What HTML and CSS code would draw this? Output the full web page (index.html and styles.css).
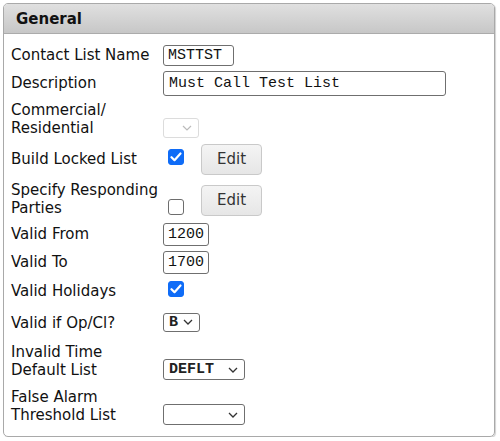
FILE: index.html
```html
<!DOCTYPE html>
<html lang="en">
<head>
    <meta charset="UTF-8">
    <title>General</title>
    <link rel="stylesheet" href="styles.css">
</head>
<body>

    <div class="panel">
        <div class="panel-head">General</div>

        <div class="panel-body">
            <div class="row row-h22">
                <div class="label">Contact List Name</div>
                <div class="field w-name">MSTTST</div>
            </div>

            <div class="row row-h26">
                <div class="label">Description</div>
                <div class="field w-desc">Must Call Test List</div>
            </div>

            <div class="row row-tall">
                <div class="label">Commercial/<br>Residential</div>
                <div class="select select-disabled w-small">
                    <span></span>
                    <svg class="chev" width="10" height="6" viewBox="0 0 10 6"><path d="M1 1l4 4 4-4" fill="none" stroke="currentColor" stroke-width="1.2"/></svg>
                </div>
            </div>

            <div class="row row-h34">
                <div class="label">Build Locked List</div>
                <div class="check checked">
                    <svg width="12" height="10" viewBox="0 0 12 10"><path d="M1.5 5.2l3 3 6-6.7" fill="none" stroke="#fff" stroke-width="2.2" stroke-linecap="round" stroke-linejoin="round"/></svg>
                </div>
                <button class="btn">Edit</button>
            </div>

            <div class="row row-tall">
                <div class="label">Specify Responding<br>Parties</div>
                <div class="check check-low"></div>
                <button class="btn btn-mid">Edit</button>
            </div>

            <div class="row row-h24">
                <div class="label">Valid From</div>
                <div class="field w-time">1200</div>
            </div>

            <div class="row row-h24">
                <div class="label">Valid To</div>
                <div class="field w-time">1700</div>
            </div>

            <div class="row row-h26">
                <div class="label">Valid Holidays</div>
                <div class="check checked">
                    <svg width="12" height="10" viewBox="0 0 12 10"><path d="M1.5 5.2l3 3 6-6.7" fill="none" stroke="#fff" stroke-width="2.2" stroke-linecap="round" stroke-linejoin="round"/></svg>
                </div>
            </div>

            <div class="row row-h30">
                <div class="label">Valid if Op/Cl?</div>
                <div class="select w-op">
                    <span>B</span>
                    <svg class="chev" width="10" height="6" viewBox="0 0 10 6"><path d="M1 1l4 4 4-4" fill="none" stroke="currentColor" stroke-width="1.3"/></svg>
                </div>
            </div>

            <div class="row row-tall">
                <div class="label">Invalid Time<br>Default List</div>
                <div class="select w-list">
                    <span>DEFLT</span>
                    <svg class="chev" width="10" height="6" viewBox="0 0 10 6"><path d="M1 1l4 4 4-4" fill="none" stroke="currentColor" stroke-width="1.3"/></svg>
                </div>
            </div>

            <div class="row row-tall row-last">
                <div class="label">False Alarm<br>Threshold List</div>
                <div class="select w-list">
                    <span></span>
                    <svg class="chev" width="10" height="6" viewBox="0 0 10 6"><path d="M1 1l4 4 4-4" fill="none" stroke="currentColor" stroke-width="1.3"/></svg>
                </div>
            </div>
        </div>
    </div>

</body>
</html>
```

FILE: styles.css
```css
/* Página */
body {
    margin: 0;
    padding: 3px 0 0 3px;
    background: #fff;
    font-family: "DejaVu Sans", Verdana, sans-serif;
    font-size: 15px;
    color: #111;
}

/* Painel */
.panel {
    width: 490px;
    height: 432px;
    border: 1px solid #a9a9a9;
    border-radius: 5px;
    box-shadow: 1px 1px 1px rgba(0, 0, 0, 0.18);
    overflow: hidden;
}
.panel-head {
    height: 29px;
    line-height: 30px;
    padding-left: 12px;
    font-weight: bold;
    color: #111;
    background: linear-gradient(#e0e0e0, #c7c7c7);
    border-bottom: 1px solid #ababab;
}
.panel-body {
    display: flex;
    flex-direction: column;
    gap: 4px;
    padding: 10px 0 0 7px;
}

/* Linhas */
.row {
    display: flex;
    align-items: center;
}
.row-h22 { height: 22px; }
.row-h24 { height: 24px; }
.row-h26 { height: 26px; }
.row-h30 { height: 30px; }
.row-h34 { height: 34px; }
.row-tall { height: 38px; align-items: flex-end; }
.row-last { margin-top: 3px; }

.label {
    width: 152px;
    flex-shrink: 0;
    line-height: 18px;
}
.row-tall .label { align-self: center; }

/* Campos */
.field {
    box-sizing: border-box;
    border: 1px solid #6f6f6f;
    border-radius: 3px;
    padding: 0 4px;
    font-family: "Liberation Mono", "Courier New", monospace;
    font-size: 15px;
    line-height: 19px;
    color: #111;
}
.w-name { width: 71px; height: 21px; }
.w-desc { width: 283px; height: 25px; line-height: 23px; padding-left: 5px; }
.w-time { width: 46px; height: 23px; line-height: 21px; }

.select {
    box-sizing: border-box;
    display: flex;
    align-items: center;
    justify-content: space-between;
    border: 1px solid #6f6f6f;
    border-radius: 3px;
    padding: 0 6px 0 5px;
    font-family: "Liberation Mono", "Courier New", monospace;
    font-weight: bold;
    font-size: 15px;
    color: #222;
    height: 21px;
}
.chev { color: #333; }
.select-disabled {
    border-color: #dcdcdc;
    height: 20px;
}
.select-disabled .chev { color: #bbb; }
.w-small { width: 36px; }
.w-op { width: 37px; height: 19px; margin-bottom: 2px; }
.w-list { width: 82px; }

/* Caixas de seleção */
.check {
    box-sizing: border-box;
    width: 16px;
    height: 16px;
    margin-left: 5px;
    border: 1px solid #6d6d6d;
    border-radius: 3px;
    background: #fff;
    display: flex;
    align-items: center;
    justify-content: center;
}
.checked {
    background: #0f6cf7;
    border-color: #0f6cf7;
    margin-top: -4px;
}
.check-low { margin-bottom: 3px; }

/* Botões */
.btn {
    box-sizing: border-box;
    width: 61px;
    height: 31px;
    margin-left: 17px;
    border: 1px solid #c9c9c9;
    border-radius: 4px;
    background: linear-gradient(#f4f4f4, #e6e6e6);
    font-family: "DejaVu Sans", Verdana, sans-serif;
    font-size: 15px;
    color: #333;
    padding: 0;
}
.btn-mid { align-self: center; margin-top: 2px; }
```
